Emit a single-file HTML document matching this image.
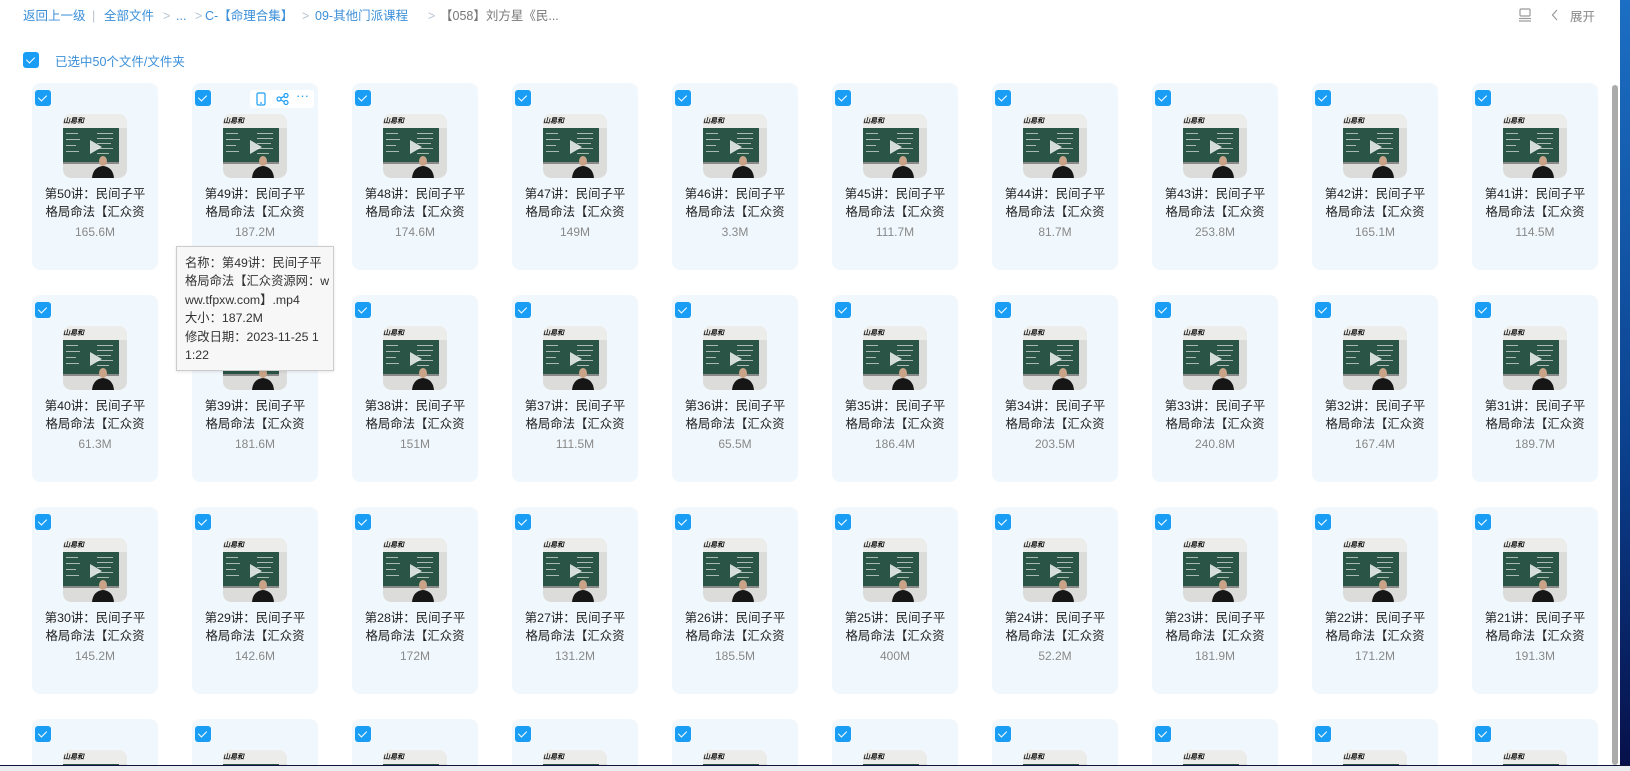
<!DOCTYPE html>
<html><head><meta charset="utf-8">
<style>
*{margin:0;padding:0;box-sizing:border-box}
html,body{width:1630px;height:771px;overflow:hidden;background:#fff;font-family:"Liberation Sans","Noto Sans CJK SC",sans-serif}
#main{position:absolute;left:0;top:0;width:1620px;height:765px;background:#fff;overflow:hidden}
.bc{position:absolute;top:7px;left:23px;font-size:12.5px;color:#3b8fd9;white-space:nowrap;line-height:18px}
.bc span{position:absolute;top:0}
.g{color:#b8c4d0}
.gr{color:#777}
.cb{width:16px;height:16px;border-radius:3px;background:#1a9ef5;position:absolute}
.cb:after{content:"";position:absolute;left:5px;top:3px;width:4px;height:7px;border:solid #fff;border-width:0 1.6px 1.6px 0;transform:rotate(45deg)}
.sel{position:absolute;left:55px;top:51px;font-size:12.5px;color:#3b8fd9}
.grid{position:absolute;left:32px;top:83px;height:682px;overflow:hidden;display:grid;grid-template-columns:repeat(10,126px);column-gap:34px;grid-auto-rows:187px;row-gap:25px}
.card{position:relative;background:#f1f8fd;border-radius:8px;text-align:center}
.card .cb{left:3px;top:7px}
.card svg.t{position:absolute;left:31px;top:31px;width:64px;height:64px;border-radius:8px;overflow:hidden}
.nm{position:absolute;top:102px;left:0;width:126px;font-size:12.4px;line-height:18px;color:#222}
.sz{position:absolute;top:142px;left:0;width:126px;font-size:12px;color:#888}
.tb{position:absolute;left:58px;top:7px;width:64px;height:18px;background:#fff;border-radius:3px}
.tip{position:absolute;left:176px;top:246px;width:158px;height:125px;background:#f7f7f7;border:1px solid #ccc;font-size:12.3px;line-height:18.4px;color:#333;padding:7px 0 0 8px;white-space:nowrap;overflow:hidden;box-shadow:0 1px 3px rgba(0,0,0,.1)}
</style></head><body>
<svg width="0" height="0" style="position:absolute"><defs>
<clipPath id="rc"><rect width="64" height="64" rx="8"/></clipPath>
<g id="th" clip-path="url(#rc)">
<rect width="64" height="64" fill="#dcdcda"/>
<rect x="0" y="0" width="64" height="14" fill="#ececea"/>
<text x="0" y="9" font-size="7" font-family="Liberation Serif,serif" font-style="italic" font-weight="bold" fill="#111">山易和</text>
<rect x="0" y="14" width="56" height="34" fill="#2a5446"/>
<rect x="0" y="48" width="56" height="2" fill="#8a8a8a"/>
<g fill="#d6ddd6" opacity=".75"><rect x="3" y="19" width="12" height="1"/><rect x="3" y="25" width="14" height="1"/><rect x="3" y="31" width="10" height="1"/><rect x="3" y="37" width="13" height="1"/><rect x="34" y="19" width="16" height="1"/><rect x="34" y="24" width="16" height="1"/><rect x="34" y="29" width="14" height="1"/><rect x="34" y="34" width="16" height="1"/><rect x="34" y="39" width="12" height="1"/></g>
<ellipse cx="40" cy="47" rx="4" ry="5" fill="#c9a488"/>
<path d="M29 64 Q30 53 40 52 Q50 53 51 64Z" fill="#161616"/>
<path d="M27 26 L27 40 L39 33Z" fill="#fff" opacity=".8"/>
</g></defs></svg>
<div id="main">
<div class="bc">
<span style="left:0">返回上一级</span>
<span class="g" style="left:69px">|</span>
<span style="left:81px">全部文件</span>
<span class="g" style="left:140px">&gt;</span>
<span style="left:153px">...</span>
<span class="g" style="left:172px">&gt;</span>
<span style="left:182px">C-【命理合集】</span>
<span class="g" style="left:279px">&gt;</span>
<span style="left:292px">09-其他门派课程</span>
<span class="g" style="left:405px">&gt;</span>
<span class="gr" style="left:417px">【058】刘方星《民...</span>
</div>
<svg style="position:absolute;left:1518px;top:8px" width="14" height="14" viewBox="0 0 14 14" fill="none" stroke="#999" stroke-width="1.2"><rect x="2" y="1" width="10" height="7" rx="1"/><line x1="1" y1="10.5" x2="13" y2="10.5"/><line x1="1" y1="13" x2="13" y2="13"/></svg>
<svg style="position:absolute;left:1551px;top:9px" width="8" height="12" viewBox="0 0 8 12" fill="none" stroke="#999" stroke-width="1.2"><path d="M6 1 L1.5 6 L6 11"/></svg>
<div style="position:absolute;left:1570px;top:6px;font-size:12.5px;color:#888">展开</div>
<div class="cb" style="left:23px;top:52px"></div>
<div class="sel">已选中50个文件/文件夹</div>
<div class="grid">
<div class="card"><div class="cb"></div><svg class="t"><use href="#th"/></svg><div class="nm">第50讲：民间子平<br>格局命法【汇众资</div><div class="sz">165.6M</div></div>
<div class="card"><div class="cb"></div><div class="tb"><svg style="position:absolute;left:6px;top:2px" width="10" height="14" viewBox="0 0 10 14" fill="none" stroke="#1a9ef5" stroke-width="1.2"><rect x="1" y="1" width="8" height="12" rx="1.5"/><line x1="4" y1="11" x2="6" y2="11"/></svg><svg style="position:absolute;left:26px;top:3px" width="13" height="12" viewBox="0 0 13 12" fill="none" stroke="#1a9ef5" stroke-width="1.2"><circle cx="3" cy="6" r="2"/><circle cx="10" cy="2.5" r="2"/><circle cx="10" cy="9.5" r="2"/><path d="M5 5 L8 3.3 M5 7 L8 8.7"/></svg><span style="position:absolute;left:46px;top:-2px;font-size:13px;color:#1a9ef5;letter-spacing:0">···</span></div><svg class="t"><use href="#th"/></svg><div class="nm">第49讲：民间子平<br>格局命法【汇众资</div><div class="sz">187.2M</div></div>
<div class="card"><div class="cb"></div><svg class="t"><use href="#th"/></svg><div class="nm">第48讲：民间子平<br>格局命法【汇众资</div><div class="sz">174.6M</div></div>
<div class="card"><div class="cb"></div><svg class="t"><use href="#th"/></svg><div class="nm">第47讲：民间子平<br>格局命法【汇众资</div><div class="sz">149M</div></div>
<div class="card"><div class="cb"></div><svg class="t"><use href="#th"/></svg><div class="nm">第46讲：民间子平<br>格局命法【汇众资</div><div class="sz">3.3M</div></div>
<div class="card"><div class="cb"></div><svg class="t"><use href="#th"/></svg><div class="nm">第45讲：民间子平<br>格局命法【汇众资</div><div class="sz">111.7M</div></div>
<div class="card"><div class="cb"></div><svg class="t"><use href="#th"/></svg><div class="nm">第44讲：民间子平<br>格局命法【汇众资</div><div class="sz">81.7M</div></div>
<div class="card"><div class="cb"></div><svg class="t"><use href="#th"/></svg><div class="nm">第43讲：民间子平<br>格局命法【汇众资</div><div class="sz">253.8M</div></div>
<div class="card"><div class="cb"></div><svg class="t"><use href="#th"/></svg><div class="nm">第42讲：民间子平<br>格局命法【汇众资</div><div class="sz">165.1M</div></div>
<div class="card"><div class="cb"></div><svg class="t"><use href="#th"/></svg><div class="nm">第41讲：民间子平<br>格局命法【汇众资</div><div class="sz">114.5M</div></div>

<div class="card"><div class="cb"></div><svg class="t"><use href="#th"/></svg><div class="nm">第40讲：民间子平<br>格局命法【汇众资</div><div class="sz">61.3M</div></div>
<div class="card"><div class="cb"></div><svg class="t"><use href="#th"/></svg><div class="nm">第39讲：民间子平<br>格局命法【汇众资</div><div class="sz">181.6M</div></div>
<div class="card"><div class="cb"></div><svg class="t"><use href="#th"/></svg><div class="nm">第38讲：民间子平<br>格局命法【汇众资</div><div class="sz">151M</div></div>
<div class="card"><div class="cb"></div><svg class="t"><use href="#th"/></svg><div class="nm">第37讲：民间子平<br>格局命法【汇众资</div><div class="sz">111.5M</div></div>
<div class="card"><div class="cb"></div><svg class="t"><use href="#th"/></svg><div class="nm">第36讲：民间子平<br>格局命法【汇众资</div><div class="sz">65.5M</div></div>
<div class="card"><div class="cb"></div><svg class="t"><use href="#th"/></svg><div class="nm">第35讲：民间子平<br>格局命法【汇众资</div><div class="sz">186.4M</div></div>
<div class="card"><div class="cb"></div><svg class="t"><use href="#th"/></svg><div class="nm">第34讲：民间子平<br>格局命法【汇众资</div><div class="sz">203.5M</div></div>
<div class="card"><div class="cb"></div><svg class="t"><use href="#th"/></svg><div class="nm">第33讲：民间子平<br>格局命法【汇众资</div><div class="sz">240.8M</div></div>
<div class="card"><div class="cb"></div><svg class="t"><use href="#th"/></svg><div class="nm">第32讲：民间子平<br>格局命法【汇众资</div><div class="sz">167.4M</div></div>
<div class="card"><div class="cb"></div><svg class="t"><use href="#th"/></svg><div class="nm">第31讲：民间子平<br>格局命法【汇众资</div><div class="sz">189.7M</div></div>

<div class="card"><div class="cb"></div><svg class="t"><use href="#th"/></svg><div class="nm">第30讲：民间子平<br>格局命法【汇众资</div><div class="sz">145.2M</div></div>
<div class="card"><div class="cb"></div><svg class="t"><use href="#th"/></svg><div class="nm">第29讲：民间子平<br>格局命法【汇众资</div><div class="sz">142.6M</div></div>
<div class="card"><div class="cb"></div><svg class="t"><use href="#th"/></svg><div class="nm">第28讲：民间子平<br>格局命法【汇众资</div><div class="sz">172M</div></div>
<div class="card"><div class="cb"></div><svg class="t"><use href="#th"/></svg><div class="nm">第27讲：民间子平<br>格局命法【汇众资</div><div class="sz">131.2M</div></div>
<div class="card"><div class="cb"></div><svg class="t"><use href="#th"/></svg><div class="nm">第26讲：民间子平<br>格局命法【汇众资</div><div class="sz">185.5M</div></div>
<div class="card"><div class="cb"></div><svg class="t"><use href="#th"/></svg><div class="nm">第25讲：民间子平<br>格局命法【汇众资</div><div class="sz">400M</div></div>
<div class="card"><div class="cb"></div><svg class="t"><use href="#th"/></svg><div class="nm">第24讲：民间子平<br>格局命法【汇众资</div><div class="sz">52.2M</div></div>
<div class="card"><div class="cb"></div><svg class="t"><use href="#th"/></svg><div class="nm">第23讲：民间子平<br>格局命法【汇众资</div><div class="sz">181.9M</div></div>
<div class="card"><div class="cb"></div><svg class="t"><use href="#th"/></svg><div class="nm">第22讲：民间子平<br>格局命法【汇众资</div><div class="sz">171.2M</div></div>
<div class="card"><div class="cb"></div><svg class="t"><use href="#th"/></svg><div class="nm">第21讲：民间子平<br>格局命法【汇众资</div><div class="sz">191.3M</div></div>

<div class="card"><div class="cb"></div><svg class="t"><use href="#th"/></svg></div>
<div class="card"><div class="cb"></div><svg class="t"><use href="#th"/></svg></div>
<div class="card"><div class="cb"></div><svg class="t"><use href="#th"/></svg></div>
<div class="card"><div class="cb"></div><svg class="t"><use href="#th"/></svg></div>
<div class="card"><div class="cb"></div><svg class="t"><use href="#th"/></svg></div>
<div class="card"><div class="cb"></div><svg class="t"><use href="#th"/></svg></div>
<div class="card"><div class="cb"></div><svg class="t"><use href="#th"/></svg></div>
<div class="card"><div class="cb"></div><svg class="t"><use href="#th"/></svg></div>
<div class="card"><div class="cb"></div><svg class="t"><use href="#th"/></svg></div>
<div class="card"><div class="cb"></div><svg class="t"><use href="#th"/></svg></div>
</div>
<div class="tip">名称：第49讲：民间子平<br>格局命法【汇众资源网：w<br>ww.tfpxw.com】.mp4<br>大小：187.2M<br>修改日期：2023-11-25 1<br>1:22</div>
<div style="position:absolute;left:1612px;top:85px;width:6px;height:680px;background:#ababab;border-radius:3px"></div>
</div>
<div style="position:absolute;left:1620px;top:0;width:10px;height:765px;background:linear-gradient(#1c6fc4,#0b3f8c 60%,#07104a)"></div>
<div style="position:absolute;left:0;top:765px;width:1630px;height:1px;background:#10143a"></div>
<div style="position:absolute;left:0;top:766px;width:1630px;height:5px;background:#e9ecf0"></div>
</body></html>
